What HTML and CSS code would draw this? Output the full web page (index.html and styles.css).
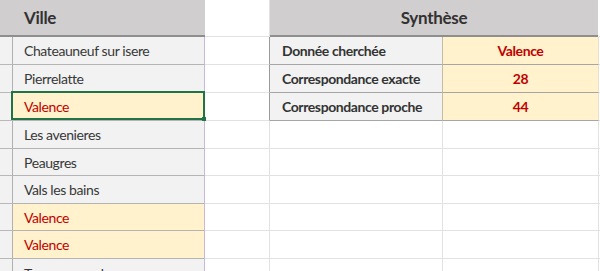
FILE: index.html
```html
<!DOCTYPE html>
<html lang="fr">
<head>
<meta charset="utf-8">
<title>Synthèse</title>
<link rel="stylesheet" href="styles.css">
</head>
<body>
<div class="sheet">
  <div class="hdr hdr-left">Ville</div>
  <div class="cell c c-hdr"></div>
  <div class="hdr hdr-right">Synthèse</div>
  <div class="cell f"></div>

  <div class="cell a"></div>
  <div class="cell b gray">Chateauneuf sur isere</div>
  <div class="cell c tb"></div>
  <div class="cell d label">Donnée cherchée</div>
  <div class="cell e value">Valence</div>
  <div class="cell f"></div>

  <div class="cell a"></div>
  <div class="cell b gray">Pierrelatte</div>
  <div class="cell c tb"></div>
  <div class="cell d label">Correspondance exacte</div>
  <div class="cell e value">28</div>
  <div class="cell f"></div>

  <div class="cell a"></div>
  <div class="cell b yellow">Valence</div>
  <div class="cell c tb"></div>
  <div class="cell d label">Correspondance proche</div>
  <div class="cell e value">44</div>
  <div class="cell f"></div>

  <div class="cell a"></div>
  <div class="cell b gray">Les avenieres</div>
  <div class="cell c"></div>
  <div class="cell d"></div>
  <div class="cell e"></div>
  <div class="cell f"></div>

  <div class="cell a"></div>
  <div class="cell b gray">Peaugres</div>
  <div class="cell c"></div>
  <div class="cell d"></div>
  <div class="cell e"></div>
  <div class="cell f"></div>

  <div class="cell a"></div>
  <div class="cell b gray">Vals les bains</div>
  <div class="cell c"></div>
  <div class="cell d"></div>
  <div class="cell e"></div>
  <div class="cell f"></div>

  <div class="cell a"></div>
  <div class="cell b yellow">Valence</div>
  <div class="cell c"></div>
  <div class="cell d"></div>
  <div class="cell e"></div>
  <div class="cell f"></div>

  <div class="cell a"></div>
  <div class="cell b yellow">Valence</div>
  <div class="cell c"></div>
  <div class="cell d"></div>
  <div class="cell e"></div>
  <div class="cell f"></div>

  <div class="cell a"></div>
  <div class="cell b gray last">Tournon sur rhone</div>
  <div class="cell c"></div>
  <div class="cell d"></div>
  <div class="cell e"></div>
  <div class="cell f"></div>

  <div class="selection"><span class="handle"></span></div>
</div>
</body>
</html>
```

FILE: styles.css
```css
html, body {
  margin: 0;
  padding: 0;
  background: #ffffff;
  overflow: hidden;
}

.sheet {
  position: relative;
  display: grid;
  grid-template-columns: 13px 192px 65px 173px 156px 1fr;
  grid-template-rows: 37px 28px 28px 28px 28px 27px 28px 27px 28px 28px;
  width: 600px;
  height: 271px;
  overflow: hidden;
  font-family: "Lato", "Open Sans", sans-serif;
  font-size: 14px;
  letter-spacing: -0.4px;
  color: #383838;
}

.cell {
  box-sizing: border-box;
  border-right: 1px solid #e2e2e2;
  border-bottom: 1px solid #e2e2e2;
  line-height: 27px;
  white-space: nowrap;
  overflow: hidden;
}

.hdr {
  box-sizing: border-box;
  grid-column: span 2;
  background: #d0cece;
  border-bottom: 2px solid #8e8e8e;
  font-weight: 700;
  font-size: 17px;
  letter-spacing: -0.3px;
  line-height: 35px;
  color: #333131;
  white-space: nowrap;
}

.hdr-left {
  padding-left: 24px;
}

.hdr-right {
  text-align: center;
  margin-right: 1px;
}

.a {
  background: #f2f2f2;
  border-right: 1px solid #b0b0b0;
  border-bottom: 1px solid #b8b8b8;
}

.b {
  padding-left: 11px;
  border-right: 1px solid #c9b6e2;
  border-bottom: 1px solid #b4b4b4;
}

.b.last {
  line-height: 30px;
}

.gray {
  background: #f2f2f2;
}

.yellow {
  background: #fff2cc;
  color: #c00000;
}

.c.tb {
  border-right: 1px solid #9a9a9a;
}

.d.label {
  background: #f2f2f2;
  padding-left: 12px;
  font-weight: 700;
  color: #333333;
  border-right: 1px solid #c4bca4;
  border-bottom: 1px solid #a6a6a6;
}

.e.value {
  background: #fff2cc;
  text-align: center;
  font-weight: 700;
  color: #c00000;
  border-bottom: 1px solid #a6a6a6;
  border-right: 1px solid #e6e0cc;
}

.f {
  border-right: none;
}

.selection {
  position: absolute;
  left: 11px;
  top: 91px;
  width: 194px;
  height: 29px;
  box-sizing: border-box;
  border: 2px solid #217346;
}

.handle {
  position: absolute;
  right: -3px;
  bottom: -3px;
  width: 4px;
  height: 4px;
  background: #217346;
}
```
